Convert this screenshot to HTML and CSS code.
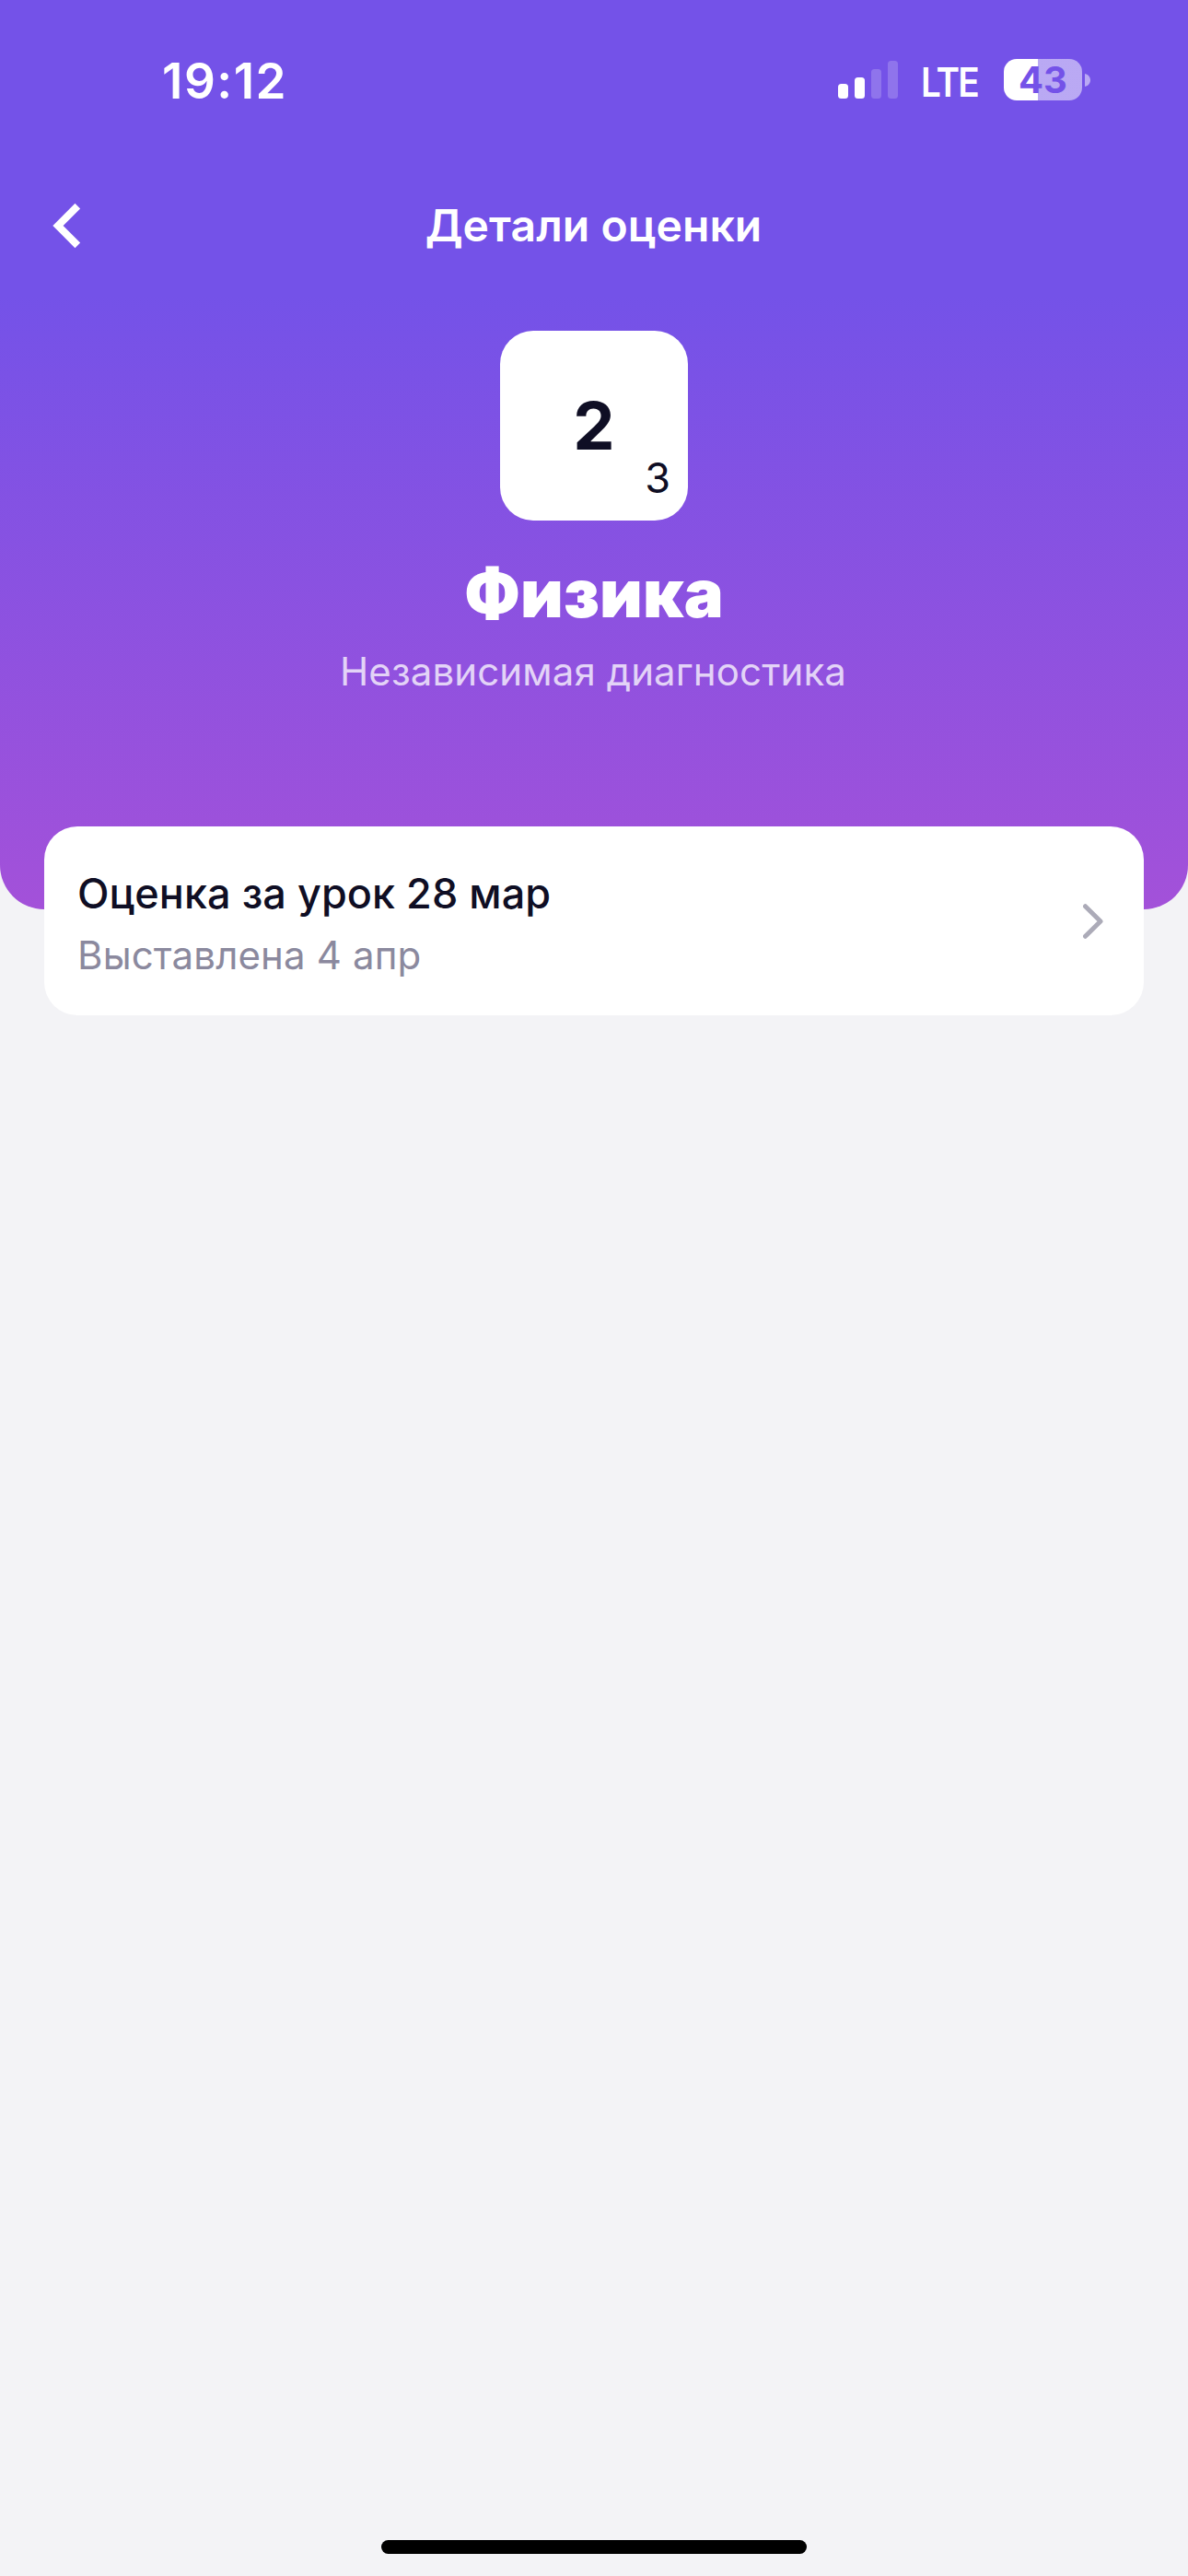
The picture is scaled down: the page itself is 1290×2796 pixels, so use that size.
FILE: index.html
```html
<!DOCTYPE html>
<html lang="ru">
<head>
  <meta charset="utf-8">
  <title>Детали оценки</title>
  <link rel="stylesheet" href="styles.css">
</head>
<body>

  <div id="screen">
    <header class="header">
      <div class="status-bar">
        <div class="time">19:12</div>
        <div class="status-icons">
          <svg class="signal" width="66" height="42" viewBox="0 0 66 42" fill="#fff">
            <rect x="0" y="25" width="11" height="16" rx="3.5"/>
            <rect x="18" y="18" width="11" height="23" rx="3.5"/>
            <rect x="36" y="9" width="11" height="32" rx="3.5" opacity=".2"/>
            <rect x="54" y="0" width="11" height="41" rx="3.5" opacity=".2"/>
          </svg>
          <span class="network">LTE</span>
          <div class="battery">
            <div class="battery-body"><span>43</span></div>
            <svg width="6" height="14" viewBox="0 0 6 14"><path d="M0 0C8 2 8 12 0 14Z" fill="#fff" opacity=".5"/></svg>
          </div>
        </div>
      </div>
      <nav class="nav">
        <button class="back">
          <svg width="31" height="50" viewBox="0 0 31 50"><path d="M27.3 3.7L6 25l21.3 21.3" fill="none" stroke="#fff" stroke-width="8"/></svg>
        </button>
        <h1>Детали оценки</h1>
      </nav>
      <div class="grade">
        <span class="grade-value">2</span>
        <span class="grade-weight">3</span>
      </div>
      <h2 class="subject">Физика</h2>
      <p class="work-type">Независимая диагностика</p>
    </header>

    <a class="lesson">
      <div class="lesson-text">
        <p class="lesson-title">Оценка за урок 28 мар</p>
        <p class="lesson-date">Выставлена 4 апр</p>
      </div>
      <svg width="22" height="38" viewBox="0 0 22 38"><path d="M2.5 2.7L19 19 2.5 35.3" fill="none" stroke="#acabb8" stroke-width="5" stroke-linecap="round" stroke-linejoin="round"/></svg>
    </a>

    <div class="home-indicator"></div>
  </div>

</body>
</html>
```

FILE: styles.css
```css
* {
  box-sizing: border-box;
}
body {
  margin: 0;
  font-family: Inter, "Liberation Sans", sans-serif;
  background-color: #f3f3f6;
  color: #0f0e24;
}
h1, h2, p {
  margin: 0;
}
#screen {
  width: 1290px;
  height: 2796px;
  display: flex;
  flex-direction: column;
  overflow: hidden;
}
.header {
  height: 987px;
  flex: none;
  display: flex;
  flex-direction: column;
  align-items: center;
  border-radius: 0 0 48px 48px;
  background: linear-gradient(#7452e8 0, #7452e8 320px, #a351d9 987px);
  color: #fff;
}
.status-bar {
  width: 100%;
  height: 178px;
  padding: 58px 106px 0 176px;
  display: flex;
  justify-content: space-between;
}
.time {
  font-size: 53px;
  line-height: 60px;
  font-weight: 570;
  letter-spacing: 1.5px;
}
.status-icons {
  height: 57px;
  display: flex;
  align-items: center;
}
.network {
  width: 63px;
  margin: 4px 27px 0 24px;
  font-size: 44px;
  line-height: 52px;
  font-weight: 600;
  letter-spacing: -2px;
  transform: scaleX(.88);
  transform-origin: 0 50%;
}
.battery {
  display: flex;
  align-items: center;
  gap: 3px;
}
.battery-body {
  width: 85px;
  height: 45px;
  border-radius: 14px;
  background: linear-gradient(90deg, #fff 37px, rgba(255, 255, 255, .5) 37px);
  color: #7452e8;
  font-size: 40px;
  line-height: 45px;
  font-weight: 700;
  text-align: center;
}
.nav {
  width: 100%;
  height: 133px;
  display: grid;
  grid-template-columns: 145px 1fr 145px;
  align-items: center;
}
.back {
  display: flex;
  padding: 0 0 0 57px;
  border: 0;
  background: none;
}
.nav h1 {
  padding-right: 1px;
  font-size: 48px;
  line-height: 60px;
  font-weight: 600;
  letter-spacing: .1px;
  text-align: center;
}
.grade {
  position: relative;
  width: 204px;
  height: 206px;
  margin-top: 48px;
  display: flex;
  justify-content: center;
  align-items: center;
  border-radius: 36px;
  background-color: #fff;
  color: #0f0e24;
}
.grade-value {
  font-size: 72px;
  line-height: 90px;
  font-weight: 700;
}
.grade-weight {
  position: absolute;
  right: 19px;
  bottom: 18px;
  font-size: 45px;
  line-height: 56px;
}
.subject {
  margin-top: 34px;
  font-size: 72px;
  line-height: 90px;
  font-weight: 900;
  letter-spacing: .2px;
}
.work-type {
  margin-top: 14px;
  padding-right: 2px;
  font-size: 42px;
  line-height: 52px;
  letter-spacing: .1px;
  color: rgba(255, 255, 255, .75);
}
.lesson {
  height: 205px;
  flex: none;
  margin: -90px 48px 0;
  padding: 0 44px 0 36px;
  display: flex;
  justify-content: space-between;
  align-items: center;
  border-radius: 36px;
  background-color: #fff;
}
.lesson-text {
  padding-top: 5px;
}
.lesson-title {
  font-size: 45px;
  line-height: 56px;
  font-weight: 500;
  letter-spacing: .05px;
}
.lesson-date {
  margin-top: 13px;
  font-size: 42px;
  line-height: 52px;
  letter-spacing: .15px;
  color: #8b899e;
}
.home-indicator {
  width: 462px;
  height: 15px;
  margin: auto auto 24px;
  border-radius: 8px;
  background-color: #000;
}
```
